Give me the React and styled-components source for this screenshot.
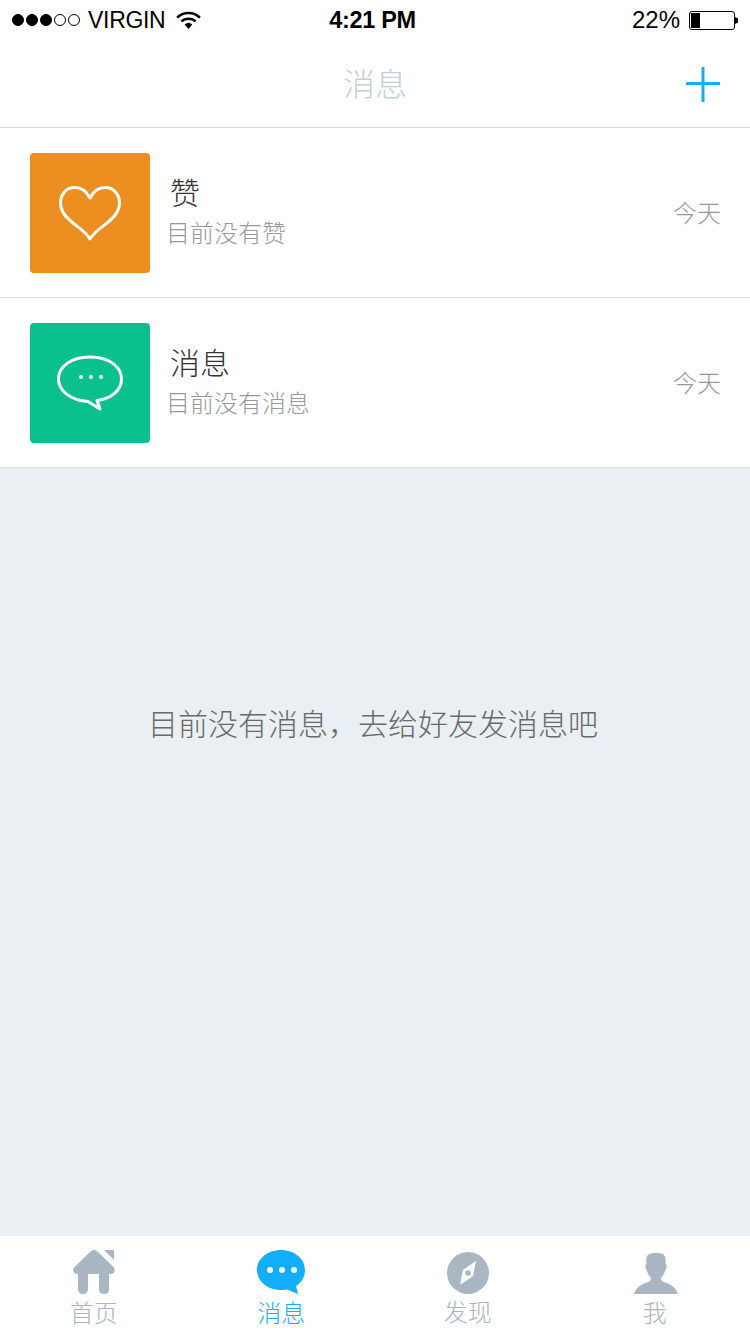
import React from "react";
import styled, { createGlobalStyle } from "styled-components";

const CJK = `"Noto Sans CJK SC", "Noto Sans", sans-serif`;

const GlobalStyle = createGlobalStyle`
    html, body {
        margin: 0;
        padding: 0;
        background: #fff;
    }
    * {
        box-sizing: border-box;
    }
`;

const Page = styled.div`
    width: 750px;
    height: 1334px;
    display: flex;
    flex-direction: column;
    background: #fff;
    overflow: hidden;
`;

const StatusBar = styled.div`
    height: 40px;
    padding: 0 12px;
    display: grid;
    grid-template-columns: 1fr auto 1fr;
    align-items: center;
    font-family: "Liberation Sans", Arial, sans-serif;
    font-size: 24px;
    color: #000;
`;

const StatusLeft = styled.div`
    display: flex;
    align-items: center;
`;

const Signal = styled.div`
    display: flex;
    gap: 2px;
    margin-right: 8px;
`;

const Dot = styled.span`
    width: 12px;
    height: 12px;
    border-radius: 50%;
    border: 1px solid #000;
    background: ${(p) => (p.$on ? "#000" : "transparent")};
`;

const Carrier = styled.span`
    font-size: 23px;
    letter-spacing: -0.3px;
    margin-right: 11px;
`;

const Time = styled.div`
    font-size: 23.5px;
    font-weight: 700;
    letter-spacing: -0.3px;
    margin-right: 5px;
`;

const StatusRight = styled.div`
    display: flex;
    align-items: center;
    justify-content: flex-end;
    gap: 9px;
`;

const NavBar = styled.div`
    height: 88px;
    position: relative;
    display: flex;
    align-items: center;
    justify-content: center;
    border-bottom: 1px solid #dcdcdc;
`;

const NavTitle = styled.div`
    font-family: ${CJK};
    font-size: 32px;
    font-weight: 300;
    color: #c4cfd9;
    margin-top: -4px;
`;

const AddButton = styled.svg`
    position: absolute;
    right: 30px;
    top: 27px;
`;

const Row = styled.div`
    height: 170px;
    padding: 25px 29px 0 30px;
    display: flex;
    align-items: flex-start;
    border-bottom: 1px solid #dcdcdc;
`;

const Tile = styled.div`
    width: 120px;
    height: 120px;
    border-radius: 4px;
    background: ${(p) => p.$bg};
    display: flex;
    align-items: center;
    justify-content: center;
    flex-shrink: 0;
`;

const RowText = styled.div`
    flex: 1;
    padding: 18px 0 0 17px;
    font-family: ${CJK};
    font-weight: 300;
`;

const RowTitle = styled.div`
    font-size: 30px;
    line-height: 40px;
    color: #333;
    padding-left: 3px;
`;

const RowSub = styled.div`
    font-size: 24px;
    line-height: 40px;
    color: #999;
    margin-left: -1px;
    margin-top: 1px;
`;

const RowTime = styled.div`
    font-family: ${CJK};
    font-weight: 300;
    font-size: 24px;
    line-height: 40px;
    color: #999;
    margin-top: 39px;
`;

const Empty = styled.div`
    flex: 1;
    background: #e9eff2;
    padding: 232px 4px 0 0;
    text-align: center;
    font-family: ${CJK};
    font-weight: 300;
    font-size: 30px;
    line-height: 44px;
    color: #6a6a6a;
`;

const TabBar = styled.div`
    height: 98px;
    display: grid;
    grid-template-columns: repeat(4, 1fr);
    background: #fff;
`;

const Tab = styled.div`
    display: flex;
    flex-direction: column;
    align-items: center;
    padding-top: 14px;
    font-family: ${CJK};
    font-weight: 300;
    font-size: 24px;
    line-height: 36px;
    color: ${(p) => (p.$active ? "#14aeff" : "#a9b5c1")};
`;

const TabLabel = styled.span`
    margin-top: ${(p) => p.$lift || 0}px;
    margin-right: ${(p) => p.$left || 0}px;
`;

const TabIcon = styled.svg`
    display: block;
    flex-shrink: 0;
    margin-top: ${(p) => p.$top || 0}px;
    margin-right: ${(p) => p.$left || 0}px;
`;

const Wifi = () => (
    <svg width="25" height="19" viewBox="0 0 26 20">
        <path d="M1 7 A17 17 0 0 1 25 7" fill="none" stroke="#000" strokeWidth="2.6" />
        <path d="M5.5 11 A11 11 0 0 1 20.5 11" fill="none" stroke="#000" strokeWidth="2.6" />
        <path d="M9 14.2 A6 6 0 0 1 17 14.2 L13 19 Z" fill="#000" />
    </svg>
);

const Battery = () => (
    <svg width="49" height="20" viewBox="0 0 49 20">
        <rect x="0.5" y="1.5" width="45" height="18" rx="2.5" fill="none" stroke="#000" strokeWidth="1" />
        <rect x="2" y="3" width="9" height="15" fill="#000" />
        <path d="M46 7 L49 8.5 V12.5 L46 14 Z" fill="#000" />
    </svg>
);

const Heart = () => (
    <svg width="64" height="56" viewBox="0 0 64 56">
        <path
            d="M32 13 C28.5 6 23 2.5 16.5 2.5 C8 2.5 2.5 10 2.5 18 C2.5 27 9 33 15 38 C21 43 28 47 32 54 C36 47 43 43 49 38 C55 33 61.5 27 61.5 18 C61.5 10 56 2.5 47.5 2.5 C41 2.5 35.5 6 32 13 Z"
            fill="none"
            stroke="#fff"
            strokeWidth="3"
            strokeLinejoin="round"
        />
    </svg>
);

const Bubble = () => (
    <svg width="68" height="56" viewBox="0 0 68 56">
        <path
            d="M34 2 C16 2 2.5 11 2.5 24 C2.5 36 15 45.5 32 46.5 L44 54 L41 45.5 C56 43.5 65.5 35 65.5 24 C65.5 11 52 2 34 2 Z"
            fill="none"
            stroke="#fff"
            strokeWidth="3"
            strokeLinejoin="round"
        />
        <circle cx="25" cy="22" r="2" fill="#fff" />
        <circle cx="35" cy="22" r="2" fill="#fff" />
        <circle cx="45" cy="22" r="2" fill="#fff" />
    </svg>
);

const HomeIcon = () => (
    <TabIcon width="42" height="44" viewBox="0 0 42 44">
        <path
            d="M21 0 C19.5 0 18.5 .6 17.5 1.6 L1.5 17 C-1 19.5 .5 24 4 24 H5 V39 C5 42 7 44 10 44 C13 44 15 42 15 39 V24 H26 V39 C26 42 28 44 31 44 C34 44 36 42 36 39 V24 H38 C41.5 24 43 19.5 40.5 17 L24.5 1.6 C23.5 .6 22.5 0 21 0 Z"
            fill="#aab6c2"
        />
        <path d="M31 0 H41 V10 Z" fill="#aab6c2" />
    </TabIcon>
);

const ChatIcon = () => (
    <TabIcon width="48" height="44" viewBox="0 0 48 44">
        <path
            d="M24 0 C10.7 0 0 8.7 0 20 C0 31.3 10.7 40 24 40 C26 40 28 39.8 30 39.4 L41 44 L39 36 C44.7 32.5 48 26.6 48 20 C48 8.7 37.3 0 24 0 Z"
            fill="#14aeff"
        />
        <circle cx="13" cy="20" r="3" fill="#fff" />
        <circle cx="25" cy="20" r="3" fill="#fff" />
        <circle cx="37" cy="20" r="3" fill="#fff" />
    </TabIcon>
);

const CompassIcon = () => (
    <TabIcon width="42" height="42" viewBox="0 0 42 42" $top={2} $left={1}>
        <circle cx="21" cy="21" r="21" fill="#aab6c2" />
        <path d="M29 9 L26 24 L13 33 L16 18 Z" fill="#fff" />
        <circle cx="21" cy="21" r="2.8" fill="#aab6c2" />
    </TabIcon>
);

const PersonIcon = () => (
    <TabIcon width="44" height="41" viewBox="0 0 44 41" $top={3} $left={1}>
        <path
            d="M13.5 2.5 C16 -.8 27 -.8 29.5 1.5 C31.5 3.5 32 6 31.5 11 C33 11.5 33 15.5 31 18 C30 21 28.5 23.5 27 25 C27 27.5 28 28.5 31 29.5 C37 31.5 42 34.5 44 41 H0 C2 34.5 7 31.5 13 29.5 C16 28.5 17 27.5 17 25 C15.5 23.5 14 21 13 18 C11 15.5 11 11.5 12.5 11 C12 7 12 4.5 13.5 2.5 Z"
            fill="#aab6c2"
        />
    </TabIcon>
);

const rows = [
    { id: "like", title: "赞", sub: "目前没有赞", bg: "#ec8f20", icon: <Heart /> },
    { id: "msg", title: "消息", sub: "目前没有消息", bg: "#0ac18e", icon: <Bubble /> },
];

const tabs = [
    { label: "首页", icon: <HomeIcon /> },
    { label: "消息", icon: <ChatIcon />, active: true },
    { label: "发现", icon: <CompassIcon />, lift: -1, left: 2 },
    { label: "我", icon: <PersonIcon />, left: 3 },
];

export default function App() {
    return (
        <Page>
            <GlobalStyle />
            <StatusBar>
                <StatusLeft>
                    <Signal>
                        {[1, 1, 1, 0, 0].map((on, i) => (
                            <Dot key={i} $on={!!on} />
                        ))}
                    </Signal>
                    <Carrier>VIRGIN</Carrier>
                    <Wifi />
                </StatusLeft>
                <Time>4:21 PM</Time>
                <StatusRight>
                    <span>22%</span>
                    <Battery />
                </StatusRight>
            </StatusBar>
            <NavBar>
                <NavTitle>消息</NavTitle>
                <AddButton width="34" height="35" viewBox="0 0 34 35">
                    <path d="M17 0 V35 M0 16.5 H34" stroke="#14aeff" strokeWidth="3" fill="none" />
                </AddButton>
            </NavBar>
            {rows.map((row) => (
                <Row key={row.id}>
                    <Tile $bg={row.bg}>{row.icon}</Tile>
                    <RowText>
                        <RowTitle>{row.title}</RowTitle>
                        <RowSub>{row.sub}</RowSub>
                    </RowText>
                    <RowTime>今天</RowTime>
                </Row>
            ))}
            <Empty>目前没有消息，去给好友发消息吧</Empty>
            <TabBar>
                {tabs.map((tab) => (
                    <Tab key={tab.label} $active={tab.active}>
                        {tab.icon}
                        <TabLabel $lift={tab.lift} $left={tab.left}>{tab.label}</TabLabel>
                    </Tab>
                ))}
            </TabBar>
        </Page>
    );
}
